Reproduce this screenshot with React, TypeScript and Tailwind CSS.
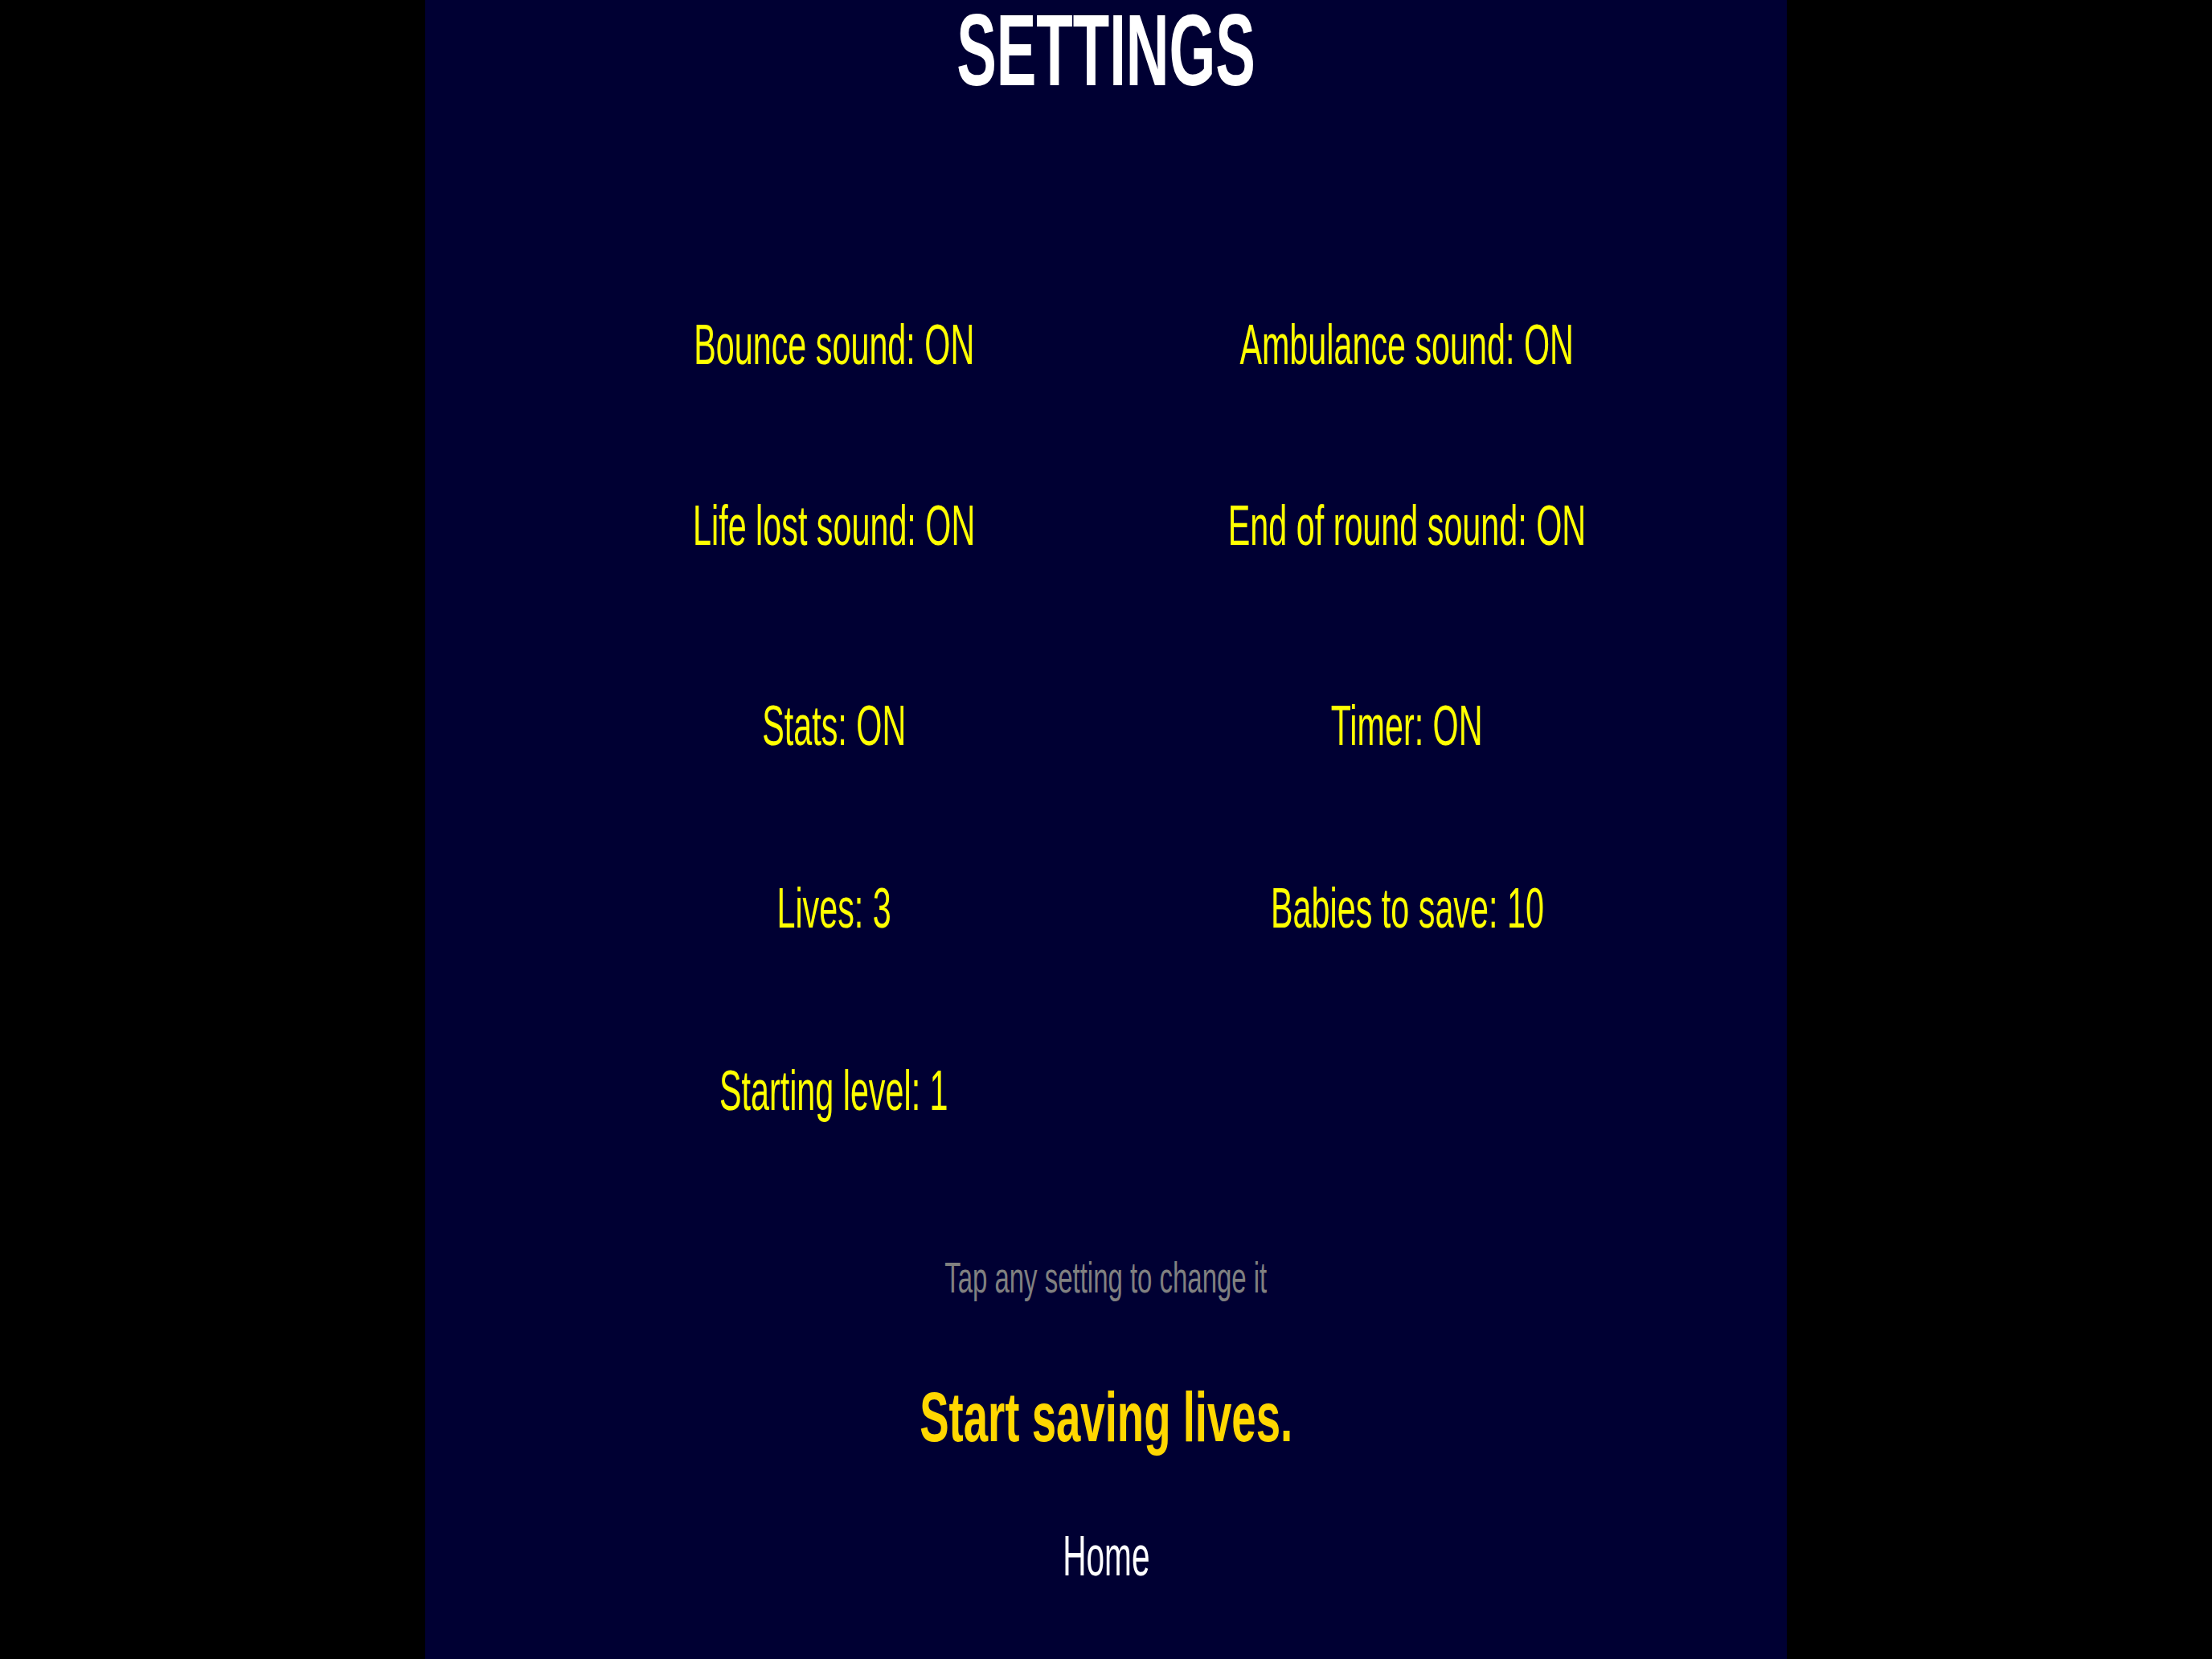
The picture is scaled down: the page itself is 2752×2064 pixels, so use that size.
import React from "react";

const font = { fontFamily: '"Liberation Sans", Arial, sans-serif' };

function Setting({ label }: { label: string }) {
  return (
    <div className="flex justify-center">
      <span className="inline-block text-[70px] leading-none text-[#ffff00] scale-x-[0.59] whitespace-nowrap">
        {label}
      </span>
    </div>
  );
}

export default function App() {
  return (
    <div className="w-full h-[2064px] bg-black overflow-hidden" style={font}>
      <div className="mx-auto w-[1694px] h-full bg-[#000033] flex flex-col">
        <div className="flex justify-center">
          <span className="inline-block text-[126px] leading-none font-bold text-white scale-x-[0.59] whitespace-nowrap">
            SETTINGS
          </span>
        </div>
        <div className="ml-[152px] w-[1426px] grid grid-cols-2 mt-[268px]">
          <Setting label="Bounce sound: ON" />
          <Setting label="Ambulance sound: ON" />
          <div className="col-span-2 h-[155px]" />
          <Setting label="Life lost sound: ON" />
          <Setting label="End of round sound: ON" />
          <div className="col-span-2 h-[179px]" />
          <Setting label="Stats: ON" />
          <Setting label="Timer: ON" />
          <div className="col-span-2 h-[157px]" />
          <Setting label="Lives: 3" />
          <Setting label="Babies to save: 10" />
          <div className="col-span-2 h-[157px]" />
          <Setting label="Starting level: 1" />
          <div />
        </div>
        <div className="mt-[170px] flex justify-center">
          <span className="inline-block text-[54px] leading-none text-[#808080] scale-x-[0.61] whitespace-nowrap">
            Tap any setting to change it
          </span>
        </div>
        <div className="mt-[103px] flex justify-center">
          <span className="inline-block text-[88px] leading-none font-bold text-[#ffd700] scale-x-[0.62] whitespace-nowrap">
            Start saving lives.
          </span>
        </div>
        <div className="mt-[94px] flex justify-center">
          <span className="inline-block text-[70px] leading-none text-white scale-x-[0.58] whitespace-nowrap">
            Home
          </span>
        </div>
      </div>
    </div>
  );
}
